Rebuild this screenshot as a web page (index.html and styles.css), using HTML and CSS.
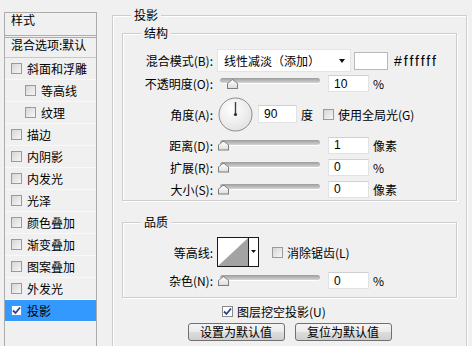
FILE: index.html
```html
<!DOCTYPE html>
<html lang="zh-CN">
<head>
    <meta charset="UTF-8">
    <title>图层样式 - 投影</title>
    <link rel="stylesheet" href="styles.css">
</head>
<body>
    <div class="dialog">
        <div class="styles-list">
            <div class="list-head">样式</div>
            <div class="list-blend">混合选项:默认</div>
            <div class="list-item"><span class="cb"></span>斜面和浮雕</div>
            <div class="list-item sub"><span class="cb"></span>等高线</div>
            <div class="list-item sub"><span class="cb"></span>纹理</div>
            <div class="list-item"><span class="cb"></span>描边</div>
            <div class="list-item"><span class="cb"></span>内阴影</div>
            <div class="list-item"><span class="cb"></span>内发光</div>
            <div class="list-item"><span class="cb"></span>光泽</div>
            <div class="list-item"><span class="cb"></span>颜色叠加</div>
            <div class="list-item"><span class="cb"></span>渐变叠加</div>
            <div class="list-item"><span class="cb"></span>图案叠加</div>
            <div class="list-item"><span class="cb"></span>外发光</div>
            <div class="list-item selected"><span class="cb checked"><svg width="9" height="9" viewBox="0 0 9 9"><path d="M1 4.5 L3.5 7 L8 1.5" fill="none" stroke="#2b3f8c" stroke-width="1.8"/></svg></span>投影</div>
        </div>

        <fieldset class="group outer">
            <legend>投影</legend>

            <fieldset class="group inner structure">
                <legend>结构</legend>
                <div class="row h25">
                    <span class="lbl">混合模式(B):</span>
                    <div class="select"><span>线性减淡（添加）</span><span class="caret"></span></div>
                    <span class="swatch"></span>
                    <span class="hex">#ffffff</span>
                </div>
                <div class="row h21">
                    <span class="lbl">不透明度(O):</span>
                    <div class="slider"><span class="track"></span><span class="thumb" style="left: 9px"></span></div>
                    <input class="num" value="10">
                    <span class="unit">%</span>
                </div>
                <div class="row h40">
                    <span class="lbl">角度(A):</span>
                    <svg class="dial" width="35" height="35" viewBox="0 0 35 35">
                        <defs>
                            <radialGradient id="dialFill" cx="0.4" cy="0.35" r="0.7">
                                <stop offset="0" stop-color="#ffffff"/>
                                <stop offset="1" stop-color="#e2e2e2"/>
                            </radialGradient>
                        </defs>
                        <circle cx="17.5" cy="17.5" r="16.5" fill="url(#dialFill)" stroke="#8c8c8c"/>
                        <line x1="17.5" y1="17.5" x2="17.5" y2="5" stroke="#404040" stroke-width="1.4"/>
                        <circle cx="17.5" cy="17.5" r="1.6" fill="#303030"/>
                    </svg>
                    <input class="num angle" value="90">
                    <span class="unit">度</span>
                    <span class="cb global"></span>
                    <span class="cb-text">使用全局光(G)</span>
                </div>
                <div class="row h22">
                    <span class="lbl">距离(D):</span>
                    <div class="slider"><span class="track"></span><span class="thumb" style="left: 0px"></span></div>
                    <input class="num" value="1">
                    <span class="unit">像素</span>
                </div>
                <div class="row h22">
                    <span class="lbl">扩展(R):</span>
                    <div class="slider"><span class="track"></span><span class="thumb" style="left: 0px"></span></div>
                    <input class="num" value="0">
                    <span class="unit">%</span>
                </div>
                <div class="row h22">
                    <span class="lbl">大小(S):</span>
                    <div class="slider"><span class="track"></span><span class="thumb" style="left: 0px"></span></div>
                    <input class="num" value="0">
                    <span class="unit">像素</span>
                </div>
            </fieldset>

            <fieldset class="group inner quality">
                <legend>品质</legend>
                <div class="row h30">
                    <span class="lbl">等高线:</span>
                    <svg class="contour" width="42" height="30" viewBox="0 0 42 30">
                        <rect x="0.5" y="0.5" width="41" height="29" fill="#fff" stroke="#1a1a1a"/>
                        <polygon points="1,29 31,1 31,29" fill="#a3a3a3"/>
                        <line x1="31.5" y1="0" x2="31.5" y2="30" stroke="#1a1a1a"/>
                        <polygon points="34,13 39,13 36.5,16" fill="#111"/>
                    </svg>
                    <span class="cb aa"></span>
                    <span class="cb-text">消除锯齿(L)</span>
                </div>
                <div class="row h21 noise">
                    <span class="lbl">杂色(N):</span>
                    <div class="slider"><span class="track"></span><span class="thumb" style="left: 0px"></span></div>
                    <input class="num" value="0">
                    <span class="unit">%</span>
                </div>
            </fieldset>

            <div class="knockout">
                <span class="cb checked"><svg width="9" height="9" viewBox="0 0 9 9"><path d="M1 4.5 L3.5 7 L8 1.5" fill="none" stroke="#2b3f8c" stroke-width="1.8"/></svg></span>
                <span class="cb-text">图层挖空投影(U)</span>
            </div>

            <div class="buttons">
                <button class="btn">设置为默认值</button>
                <button class="btn">复位为默认值</button>
            </div>
        </fieldset>
    </div>
</body>
</html>
```

FILE: styles.css
```css
* {
    box-sizing: border-box;
}
body {
    margin: 0;
    background-color: #f0f0f0;
    font-family: "Noto Sans CJK SC", sans-serif;
    font-size: 12px;
    color: #000;
    overflow: hidden;
}
.dialog {
    display: flex;
    align-items: flex-start;
    height: 346px;
    overflow: hidden;
}

/* left list of styles */
.styles-list {
    flex: none;
    margin: 12px 0 0 4px;
    width: 93px;
    height: 360px;
    border: 1px solid #acacac;
}
.list-head {
    height: 25px;
    line-height: 14px;
    padding-left: 6px;
    border-bottom: 3px double #acacac;
}
.list-blend {
    height: 20px;
    line-height: 14px;
    padding-left: 6px;
    border-bottom: 1px solid #c8c8c8;
    white-space: nowrap;
}
.list-item {
    display: flex;
    align-items: center;
    height: 22px;
    padding-left: 6px;
    border-bottom: 1px solid #f8f8f8;
    white-space: nowrap;
}
.list-item.sub {
    padding-left: 20px;
}
.list-item .cb {
    margin-right: 5px;
}
.list-item.selected {
    background-color: #3399ff;
}

/* checkboxes */
.cb {
    flex: none;
    display: inline-flex;
    align-items: center;
    justify-content: center;
    width: 11px;
    height: 11px;
    border: 1px solid #9a9a9a;
    background: linear-gradient(135deg, #d6d6d6, #f6f6f6);
}
.cb.checked {
    background: #fff;
    border-color: #8a8a8a;
}
.cb-text {
    margin-left: 4px;
    white-space: nowrap;
}

/* group boxes */
.group {
    margin: 0;
    min-width: 0;
    border: 1px solid #cdcdcd;
    box-shadow: inset 1px 1px 0 #fff, 1px 1px 0 #fff;
}
.group > legend {
    margin-left: 18px;
    padding: 0 3px;
    line-height: 14px;
    background-color: #f0f0f0;
}
.outer {
    flex: none;
    margin: 8px 0 0 15px;
    width: 355px;
    padding: 4px 0 12px;
}
.inner {
    margin: 0 9px;
    padding: 8px 0 0;
}
.quality {
    margin-top: 14px;
    padding-bottom: 6px;
}

/* rows */
.row {
    display: flex;
    align-items: center;
    white-space: nowrap;
}
.h21 { height: 21px; }
.h22 { height: 22px; }
.h25 { height: 25px; }
.h30 { height: 30px; }
.h40 { height: 40px; }
.noise {
    margin-top: 3px;
}
.lbl {
    flex: none;
    width: 90px;
    margin-right: 4px;
    text-align: right;
}

.select {
    display: flex;
    align-items: center;
    justify-content: space-between;
    width: 134px;
    height: 23px;
    padding: 0 5px 0 6px;
    background-color: #fff;
    border: 1px solid #e4e4e4;
}
.caret {
    width: 0;
    height: 0;
    border-left: 3.5px solid transparent;
    border-right: 3.5px solid transparent;
    border-top: 4px solid #111;
}
.swatch {
    margin-left: 3px;
    width: 34px;
    height: 18px;
    background-color: #fff;
    border: 1px solid #b9b9b9;
}
.hex {
    margin-left: 6px;
    font-family: "Liberation Sans", Arial, sans-serif;
    font-size: 14px;
    letter-spacing: 2px;
}

.slider {
    position: relative;
    flex: none;
    margin-left: 1px;
    width: 102px;
    height: 11px;
}
.track {
    position: absolute;
    left: 2px;
    right: 0;
    top: 0;
    height: 5px;
    border-radius: 3px;
    background: linear-gradient(#9c9c9c, #d4d4d4);
    box-shadow: 0 1px 0 #fff;
}
.thumb {
    position: absolute;
    top: 1px;
    width: 11px;
    height: 10px;
    background: #7d7d7d;
    clip-path: polygon(50% 0, 100% 45%, 100% 100%, 0 100%, 0 45%);
}
.thumb::before {
    content: "";
    position: absolute;
    inset: 1px;
    background: linear-gradient(#ffffff, #dcdcdc);
    clip-path: polygon(50% 0, 100% 45%, 100% 100%, 0 100%, 0 45%);
}

.num {
    margin-left: 8px;
    width: 41px;
    height: 17px;
    padding: 0 0 0 5px;
    border: 1px solid #e2e2e2;
    border-top-color: #d0d0d0;
    background-color: #fff;
    font-family: "Liberation Sans", Arial, sans-serif;
    font-size: 12px;
    color: #000;
    outline: none;
}
.num.angle {
    margin-left: 5px;
    width: 39px;
    height: 18px;
}
.unit {
    margin-left: 4px;
}
.dial {
    flex: none;
    margin-left: 1px;
}
.cb.global {
    margin-left: 10px;
}
.contour {
    flex: none;
}
.cb.aa {
    margin-left: 13px;
}

.knockout {
    display: flex;
    align-items: center;
    height: 14px;
    margin: 6px 0 0 109px;
}
.buttons {
    display: flex;
    justify-content: center;
    gap: 10px;
    margin-top: 5px;
}
.btn {
    width: 97px;
    height: 18px;
    padding: 0;
    border: 1px solid #707070;
    border-radius: 3px;
    background: linear-gradient(#f4f4f4 0%, #ebebeb 50%, #dddddd 51%, #cfcfcf 100%);
    font-family: "Noto Sans CJK SC", sans-serif;
    font-size: 12px;
    line-height: 14px;
    color: #000;
}
```
